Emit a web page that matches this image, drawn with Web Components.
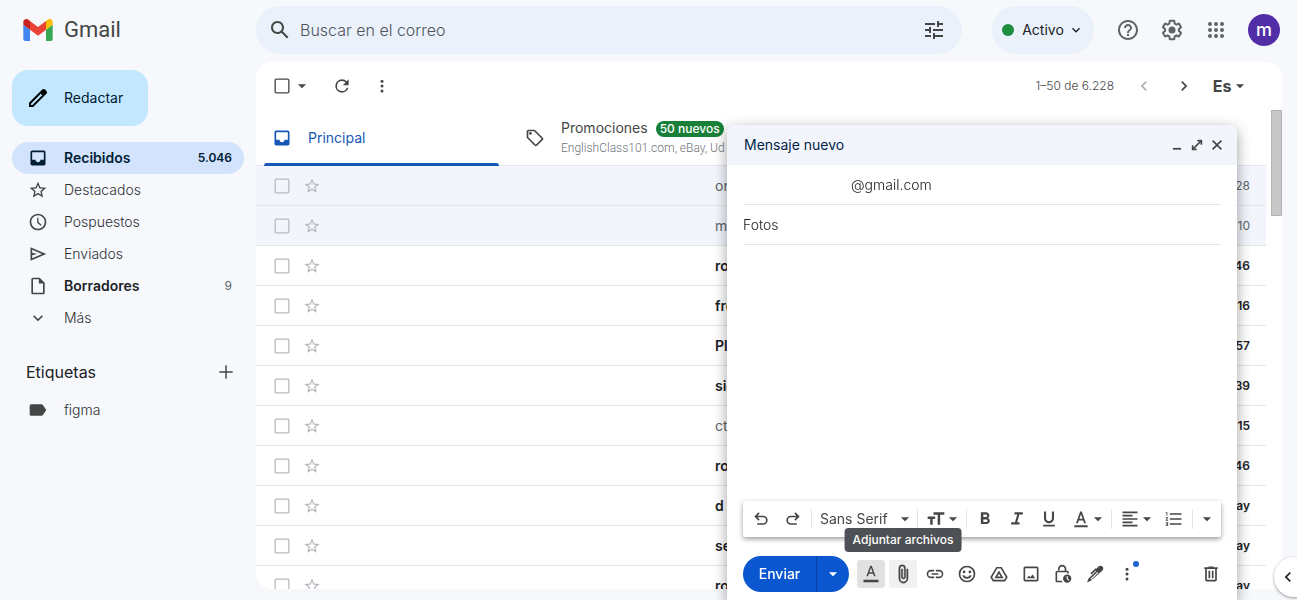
<!DOCTYPE html>
<html lang="es">
<head>
<meta charset="utf-8">
<meta name="viewport" content="width=device-width, initial-scale=1">
<title>Gmail</title>
<style>
  html, body { margin: 0; height: 100%; }
  body {
    --ink: #202124;
    --muted: #444746;
    --soft: #5f6368;
    --page: #f6f8fc;
    --field: #eaf1fb;
    --line: #e4e6e9;
    --blue: #0b57d0;
    background: var(--page);
    color: var(--ink);
    font: 14px/20px Inter, "Open Sans", sans-serif;
    overflow: hidden;
  }
</style>
</head>
<body>
<gm-app></gm-app>

<script>
const ICONS = {
  search: '<path d="M20.49 19l-5.73-5.73C15.53 12.2 16 10.91 16 9.5 16 5.91 13.09 3 9.5 3S3 5.91 3 9.5 5.91 16 9.5 16c1.41 0 2.7-.47 3.77-1.24L19 20.49 20.49 19zM5 9.5C5 7.01 7.01 5 9.5 5S14 7.01 14 9.5 11.99 14 9.5 14 5 11.99 5 9.5z"/>',
  tune: '<path d="M3 17v2h6v-2H3zM3 5v2h10V5H3zm10 16v-2h8v-2h-8v-2h-2v6h2zM7 9v2H3v2h4v2h2V9H7zm14 4v-2H11v2h10zm-6-4h2V7h4V5h-4V3h-2v6z"/>',
  down: '<path d="M7.41 8.59 12 13.17l4.59-4.58L18 10l-6 6-6-6z"/>',
  left: '<path d="M15.41 7.41 14 6l-6 6 6 6 1.41-1.41L10.83 12z"/>',
  right: '<path d="M8.59 16.59 10 18l6-6-6-6-1.41 1.41L13.17 12z"/>',
  caret: '<path d="M5 9l7 7 7-7z"/>',
  help: '<path d="M11 18h2v-2h-2v2zm1-16C6.48 2 2 6.48 2 12s4.48 10 10 10 10-4.48 10-10S17.52 2 12 2zm0 18c-4.41 0-8-3.59-8-8s3.59-8 8-8 8 3.59 8 8-3.59 8-8 8zm0-14c-2.21 0-4 1.79-4 4h2c0-1.1.9-2 2-2s2 .9 2 2c0 2-3 1.75-3 5h2c0-2.25 3-2.5 3-5 0-2.21-1.79-4-4-4z"/>',
  settings: '<path d="M13.85 22.25h-3.7c-.74 0-1.36-.54-1.45-1.27l-.27-1.89c-.27-.14-.53-.29-.79-.46l-1.8.72c-.7.26-1.47-.03-1.81-.65L2.2 15.53c-.35-.66-.2-1.44.36-1.88l1.53-1.19c-.01-.15-.02-.3-.02-.46 0-.15.01-.31.02-.46l-1.52-1.19c-.59-.45-.74-1.26-.37-1.88l1.85-3.19c.34-.62 1.11-.9 1.79-.63l1.81.73c.26-.17.52-.32.78-.46l.27-1.91c.09-.7.71-1.25 1.44-1.25h3.7c.74 0 1.36.54 1.45 1.27l.27 1.89c.27.14.53.29.79.46l1.8-.72c.71-.26 1.48.03 1.82.65l1.84 3.18c.36.66.2 1.44-.36 1.88l-1.52 1.19c.01.15.02.3.02.46s-.01.31-.02.46l1.52 1.19c.56.45.72 1.23.37 1.86l-1.86 3.22c-.34.62-1.11.9-1.8.63l-1.8-.72c-.26.17-.52.32-.78.46l-.27 1.91c-.1.68-.72 1.22-1.46 1.22zm-3.23-2h2.76l.37-2.55.53-.22c.44-.18.88-.44 1.34-.78l.45-.34 2.38.96 1.38-2.4-2.03-1.58.07-.56c.03-.26.06-.51.06-.78s-.03-.53-.06-.78l-.07-.56 2.03-1.58-1.39-2.4-2.39.96-.45-.35c-.42-.32-.87-.58-1.33-.77l-.52-.22-.37-2.55h-2.76l-.37 2.55-.53.21c-.44.19-.88.44-1.34.79l-.45.33-2.38-.95-1.39 2.39 2.03 1.58-.07.56a7 7 0 0 0-.06.79c0 .26.02.53.06.78l.07.56-2.03 1.58 1.38 2.4 2.39-.96.45.35c.43.33.86.58 1.33.77l.53.22.38 2.55z"/><circle cx="12" cy="12" r="3.5"/>',
  apps: '<circle cx="6" cy="6" r="2"/><circle cx="12" cy="6" r="2"/><circle cx="18" cy="6" r="2"/><circle cx="6" cy="12" r="2"/><circle cx="12" cy="12" r="2"/><circle cx="18" cy="12" r="2"/><circle cx="6" cy="18" r="2"/><circle cx="12" cy="18" r="2"/><circle cx="18" cy="18" r="2"/>',
  pen: '<path d="M20.41 4.94l-1.35-1.35c-.78-.78-2.05-.78-2.83 0L3 16.82V21h4.18L20.41 7.77c.79-.78.79-2.05 0-2.83zm-14 14.12L5 19v-1.36l9.82-9.82 1.41 1.41-9.82 9.83z"/>',
  inbox: '<path d="M19 3H5c-1.1 0-2 .9-2 2v14c0 1.1.9 2 2 2h14c1.1 0 2-.9 2-2V5c0-1.1-.9-2-2-2zm0 11h-4c0 1.66-1.35 3-3 3s-3-1.34-3-3H5V5h14v9z"/>',
  star: '<path d="M22 9.24l-7.19-.62L12 2 9.19 8.63 2 9.24l5.46 4.73L5.82 21 12 17.27 18.18 21l-1.63-7.03L22 9.24zM12 15.4l-3.76 2.27 1-4.28-3.32-2.88 4.38-.38L12 6.1l1.71 4.04 4.38.38-3.32 2.88 1 4.28L12 15.4z"/>',
  clock: '<path d="M12 2C6.5 2 2 6.5 2 12s4.5 10 10 10 10-4.5 10-10S17.5 2 12 2zm0 18c-4.41 0-8-3.59-8-8s3.59-8 8-8 8 3.59 8 8-3.59 8-8 8zm-1-13h1.6v5.1l3.6 3.2-1.1 1.2L11 12.8z"/>',
  send: '<path d="M3 20V4l19 8L3 20zm2-3 11.85-5L5 7v3.5l6 1.5-6 1.5V17z"/>',
  file: '<path d="M14 2H6c-1.1 0-2 .9-2 2v16c0 1.1.9 2 2 2h12c1.1 0 2-.9 2-2V8l-6-6zM6 20V4h7v5h5v11H6z"/>',
  plus: '<path d="M20 12.900h-7.100V20h-1.800v-7.100H4v-1.800h7.100V4h1.800v7.100H20z"/>',
  label: '<path d="M17.6 5.8C17.3 5.3 16.700 5 16 5H4C2.900 5 2 5.900 2 7v10c0 1.100.9 2 2 2h12c.7 0 1.300-.3 1.600-.8L22 12z"/>',
  refresh: '<path d="M17.65 6.35A7.96 7.96 0 0 0 12 4a8 8 0 1 0 7.73 10h-2.080A6 6 0 1 1 12 6c1.660 0 3.140.69 4.220 1.780L13 11h7V4l-2.350 2.350z"/>',
  more: '<circle cx="12" cy="5.500" r="2"/><circle cx="12" cy="12" r="2"/><circle cx="12" cy="18.500" r="2"/>',
  tag: '<path d="M21.410 11.580 12.410 2.580C12.050 2.220 11.550 2 11 2H4c-1.100 0-2 .9-2 2v7c0 .55.22 1.050.59 1.420l9 9c.78.78 2.040.78 2.820 0l7-7c.78-.78.78-2.050 0-2.840zM13 20 4 11V4h7l9 9-7 7z"/><circle cx="6.500" cy="6.500" r="1.600"/>',
  minimize: '<path d="M5 17h14v3H5z"/>',
  expand: '<path d="M22 2v9h-2.500V6.300L6.300 19.500H11V22H2v-9h2.500v4.700L17.700 4.500H13V2z" stroke="currentColor" stroke-width=".8"/>',
  close: '<path d="M19.500 6.200 17.800 4.500 12 10.300 6.200 4.500 4.500 6.200 10.300 12 4.500 17.800 6.200 19.500 12 13.700 17.800 19.500 19.500 17.800 13.700 12z"/>',
  undo: '<path d="M7.500 19v-2h7a3.500 3.500 0 0 0 0-7H7.800l2.600 2.600L9 14 4 9l5-5 1.400 1.400L7.800 8h6.700a5.500 5.500 0 0 1 0 11z"/>',
  redo: '<path d="M16.500 19v-2h-7a3.500 3.500 0 0 1 0-7h6.700l-2.600 2.600L15 14l5-5-5-5-1.400 1.400L16.200 8H9.500a5.500 5.500 0 0 0 0 11z"/>',
  size: '<path d="M9 4v3h5v12h3V7h5V4zM2 12h3v7h3v-7h3V9H2z"/>',
  bold: '<path d="M15.600 10.790c.97-.67 1.650-1.770 1.650-2.790 0-2.260-1.750-4-4-4H7v14h7.040c2.090 0 3.710-1.700 3.710-3.790 0-1.520-.86-2.820-2.150-3.420zM10 6.500h3c.83 0 1.500.67 1.500 1.500s-.67 1.500-1.500 1.500h-3v-3zm3.500 9H10v-3h3.500c.83 0 1.500.67 1.500 1.500s-.67 1.500-1.500 1.500z"/>',
  italic: '<path d="M9 4v2.500h3.300l-2.700 9.500H5v2.500h10V16h-2.800l2.700-9.500H19V4z"/>',
  underline: '<path d="M12 17c3.310 0 6-2.690 6-6V3h-2.500v8c0 1.930-1.570 3.500-3.500 3.500S8.500 12.930 8.500 11V3H6v8c0 3.310 2.690 6 6 6zm-7 2v2h14v-2H5z"/>',
  color: '<path d="M4 19.500h16V22H4zM11 3 6 17h2.200l1.200-3.300h5.200l1.200 3.300H18L13 3h-2zm-.9 8.800L12 6.200l1.900 5.600h-3.800z"/>',
  format: '<path d="M2 19.500h20V23H2zM11 1 5.800 15h2.100l1.300-3.400h5.600l1.300 3.400h2.100L13 1h-2zm-1.200 8.800L12 3.600l2.200 6.200H9.800z"/>',
  align: '<path d="M15 15H3v2h12v-2zm0-8H3v2h12V7zM3 13h18v-2H3v2zm0 8h18v-2H3v2zM3 3v2h18V3H3z"/>',
  list: '<path d="M2 17h2v.5H3v1h1v.5H2v1h3v-4H2v1zm1-9h1V4H2v1h1v3zm-1 3h1.800L2 13.100v.9h3v-1H3.200L5 10.900V10H2v1zm5-6v2h14V5H7zm0 14h14v-2H7v2zm0-6h14v-2H7v2z"/>',
  clip: '<path d="M16.500 6v11.500a4 4 0 0 1-8 0V5a2.500 2.500 0 0 1 5 0v10.500a1 1 0 0 1-2 0V6H10v9.500a2.500 2.500 0 0 0 5 0V5a4 4 0 0 0-8 0v12.500a5.500 5.500 0 0 0 11 0V6z" stroke="currentColor" stroke-width=".6"/>',
  link: '<path d="M3.900 12A3.100 3.100 0 0 1 7 8.900h4V7H7a5 5 0 0 0 0 10h4v-1.900H7A3.100 3.100 0 0 1 3.900 12zM8 13h8v-2H8zm9-6h-4v1.900h4a3.100 3.100 0 0 1 0 6.200h-4V17h4a5 5 0 0 0 0-10z"/>',
  smile: '<path d="M12 2a10 10 0 1 0 0 20 10 10 0 0 0 0-20zm0 18a8 8 0 1 1 0-16 8 8 0 0 1 0 16z"/><circle cx="8.500" cy="9.500" r="1.600"/><circle cx="15.500" cy="9.500" r="1.600"/><path d="M6.500 13.500h2.200a3.600 3.600 0 0 0 6.600 0h2.200a5.700 5.700 0 0 1-11 0z"/>',
  drive: '<path d="M8.800 3.500h6.400L22.500 15.800 19.300 21H4.700l-3.200-5.200zm1.100 2-6.100 10.300L5.800 19h12.400l2-3.200L14.100 5.500z"/><path fill-rule="evenodd" d="M12 7.800 6.500 17h11zm0 3.800 2 3.500h-4z"/>',
  image: '<path d="M19 5v14H5V5h14m0-2H5c-1.100 0-2 .9-2 2v14c0 1.100.9 2 2 2h14c1.100 0 2-.9 2-2V5c0-1.100-.9-2-2-2zM7 17h10l-3.200-4.300-2.500 3.200-1.700-2z"/>',
  lock: '<path d="M10.500 20H5V10h12v1.500h2V10c0-1.100-.9-2-2-2h-1V6A5 5 0 0 0 6 6v1.500h2V6a3 3 0 0 1 6 0v2H5c-1.100 0-2 .9-2 2v10c0 1.100.9 2 2 2h6.500z"/><path fill-rule="evenodd" d="M17 12.500a5 5 0 1 0 0 10 5 5 0 0 0 0-10zm-.6 2h1.200v2.700l1.900 1.900-.9.9-2.200-2.300z"/>',
  sign: '<path d="M21 3c-1.400-1.400-3.400-1.300-4.800 0L13.500 5.700 12.700 5 6.500 11.200l1.400 1.400 4.800-4.800.7.700L4 17.800 2.500 22l4.200-1.500L21 7.800c1.300-1.400 1.300-3.500 0-4.800zM6.500 17.900l8.300-8.300 1 1-8.300 8.300z"/>',
  trash: '<path d="M15 4V3H9v1H4v2h1v13c0 1.100.9 2 2 2h10c1.100 0 2-.9 2-2V6h1V4h-5zm2 15H7V6h10v13zM9 8h2v9H9zm4 0h2v9h-2z"/>'
};

/* Shared reset used inside each shadow root. */
const BASE = `
  * { box-sizing: border-box; }
  :host([hidden]) { display: none; }
  button, input, select, textarea { font: inherit; color: inherit; border: 0; margin: 0; padding: 0; background: none; outline: 0; }
  button { cursor: pointer; display: flex; align-items: center; justify-content: center; }
  a { color: inherit; text-decoration: none; }
`;

const define = (name, render) => customElements.define(name, class extends HTMLElement {
  connectedCallback() {
    if (this.shadowRoot) return;
    const tpl = document.createElement('template');
    tpl.innerHTML = render(this);
    this.attachShadow({ mode: 'open' }).append(tpl.content.cloneNode(true));
  }
});

define('gm-icon', el => {
  const size = el.getAttribute('size') || 20;
  return `<style>:host{display:block;flex:none;width:${size}px;height:${size}px}svg{display:block;width:100%;height:100%;fill:currentColor}</style>
  <svg viewBox="0 0 24 24" aria-hidden="true">${ICONS[el.getAttribute('name')]}</svg>`;
});

define('gm-logo', () => `<style>
  :host { display: flex; align-items: center; gap: 11px; color: #444746; font: 22px/28px Roboto, sans-serif; }
  svg { width: 30px; height: 22px; }
  </style>
  <svg viewBox="52 42 88 66" aria-hidden="true">
    <path fill="#4285f4" d="M58 108h14V74L52 59v43c0 3.320 2.690 6 6 6"/>
    <path fill="#34a853" d="M120 108h14c3.320 0 6-2.690 6-6V59l-20 15"/>
    <path fill="#fbbc04" d="M120 48v26l20-15v-8c0-7.420-8.470-11.650-14.400-7.200"/>
    <path fill="#ea4335" d="M72 74V48l24 18 24-18v26L96 92"/>
    <path fill="#c5221f" d="M52 51v8l20 15V48l-5.600-4.200c-5.940-4.450-14.400-.22-14.400 7.200"/>
  </svg><span>Gmail</span>`);

define('gm-header', () => `<style>${BASE}
  :host { display: flex; align-items: center; height: 62px; padding: 6px 17px 8px 0; }
  gm-logo { width: 256px; flex: none; padding-left: 23px; }
  .search { flex: 1; min-width: 0; height: 48px; margin-right: 30px; border-radius: 24px; background: var(--field); display: flex; align-items: center; padding: 0 16px 0 12px; gap: 8px; color: var(--muted); }
  .search input { flex: 1; min-width: 0; font-size: 16px; font-weight: 300; line-height: 24px; }
  .search input::placeholder { color: #50545a; opacity: 1; }
  .status { height: 48px; width: 102px; border-radius: 24px; background: var(--field); margin-right: 14px; flex: none; }
  .dot { width: 12px; height: 12px; margin-right: 8px; border-radius: 50%; background: #1e8e3e; }
  .status gm-icon { margin-left: 4px; }
  .tools { display: flex; align-items: center; gap: 4px; color: var(--soft); }
  .tools button { width: 40px; height: 40px; }
  .tools .avatar { width: 32px; height: 32px; margin-left: 8px; border-radius: 50%; background: #512da8; color: #fff; font-size: 18px; font-weight: 500; line-height: 20px; }
  </style>
  <gm-logo></gm-logo>
  <form class="search" role="search">
    <button type="button" aria-label="Buscar"><gm-icon name="search" size="24"></gm-icon></button>
    <input type="text" placeholder="Buscar en el correo" aria-label="Buscar en el correo">
    <button type="button" aria-label="Opciones de búsqueda"><gm-icon name="tune" size="24"></gm-icon></button>
  </form>
  <button class="status"><span class="dot"></span><span>Activo</span><gm-icon name="down" size="16"></gm-icon></button>
  <div class="tools">
    <button aria-label="Ayuda"><gm-icon name="help" size="24"></gm-icon></button>
    <button aria-label="Configuración"><gm-icon name="settings" size="24"></gm-icon></button>
    <button aria-label="Aplicaciones"><gm-icon name="apps" size="24"></gm-icon></button>
    <button class="avatar" aria-label="Cuenta">m</button>
  </div>`);

define('gm-nav-item', el => `<style>${BASE}
  :host { display: block; color: var(--muted); }
  a { display: flex; align-items: center; gap: 16px; height: 32px; padding: 0 12px 0 16px; border-radius: 16px; }
  slot { display: block; }
  .label { flex: 1; font-weight: 300; color: #2d3033; }
  .count { font-size: 12px; }
  :host([unread]) { color: var(--muted); }
  :host([unread]) .label { font-weight: 600; color: var(--ink); }
  :host([unread]) .count { color: var(--soft); }
  :host([current]) { color: #001d35; }
  :host([current]) a { background: #d3e3fd; }
  :host([current]) .label { font-weight: 600; color: inherit; }
  :host([current]) .count { font-weight: 600; color: inherit; }
  </style>
  <a href="#"><gm-icon name="${el.getAttribute('icon')}" size="${el.getAttribute('size') || 20}"></gm-icon><span class="label"><slot></slot></span>${el.hasAttribute('count') ? `<span class="count">${el.getAttribute('count')}</span>` : ''}</a>`);

define('gm-sidebar', () => `<style>${BASE}
  :host { display: block; width: 256px; flex: none; padding: 8px 12px; }
  .compose { width: 136px; height: 56px; border-radius: 16px; background: #c2e7ff; color: #001d35; justify-content: flex-start; gap: 14px; padding-left: 14px; margin-bottom: 16px; }
  .compose gm-icon { color: #000; }
  .labels { display: flex; align-items: center; justify-content: space-between; height: 32px; padding: 0 8px 0 14px; margin: 22px 0 6px; }
  .labels button { color: var(--muted); }
  h2 { margin: 0; font-size: 16px; line-height: 24px; font-weight: 400; }
  </style>
  <button class="compose"><gm-icon name="pen" size="24"></gm-icon><span>Redactar</span></button>
  <nav>
    <gm-nav-item icon="inbox" count="5.046" current>Recibidos</gm-nav-item>
    <gm-nav-item icon="star">Destacados</gm-nav-item>
    <gm-nav-item icon="clock">Pospuestos</gm-nav-item>
    <gm-nav-item icon="send">Enviados</gm-nav-item>
    <gm-nav-item icon="file" count="9" unread>Borradores</gm-nav-item>
    <gm-nav-item icon="down">Más</gm-nav-item>
  </nav>
  <div class="labels"><h2>Etiquetas</h2><button aria-label="Crear etiqueta"><gm-icon name="plus" size="20"></gm-icon></button></div>
  <nav><gm-nav-item icon="label">figma</gm-nav-item></nav>`);

const box = c => `url("data:image/svg+xml,%3Csvg xmlns='http://www.w3.org/2000/svg' viewBox='0 0 24 24' fill='%23${c}'%3E%3Cpath d='M19.400 4.600v14.800H4.600V4.600h14.800m-.4-1.600H5c-1.100 0-2 .9-2 2v14c0 1.100.9 2 2 2h14c1.100 0 2-.9 2-2V5c0-1.100-.9-2-2-2z'/%3E%3C/svg%3E")`;

define('gm-list-toolbar', () => `<style>${BASE}
  :host { display: flex; align-items: center; height: 48px; padding: 0 30px 0 16px; color: var(--muted); }
  input { appearance: none; width: 20px; height: 20px; background: ${box('444746')}; }
  .menu { width: 20px; height: 40px; margin-right: 10px; }
  .act { width: 40px; height: 40px; }
  .range { margin-left: auto; margin-right: 10px; font-size: 12px; font-weight: 300; color: var(--muted); }
  .off { color: #b0b3b6; }
  .lang { width: 48px; height: 40px; padding-left: 4px; gap: 2px; font-weight: 700; font-size: 16px; }
  </style>
  <input type="checkbox" aria-label="Seleccionar">
  <button class="menu" aria-label="Opciones de selección"><gm-icon name="caret" size="14"></gm-icon></button>
  <button class="act" aria-label="Actualizar"><gm-icon name="refresh" size="20"></gm-icon></button>
  <button class="act" aria-label="Más"><gm-icon name="more" size="18"></gm-icon></button>
  <span class="range">1–50 de 6.228</span>
  <button class="act off" aria-label="Más recientes"><gm-icon name="left" size="20"></gm-icon></button>
  <button class="act" aria-label="Más antiguos"><gm-icon name="right" size="20"></gm-icon></button>
  <button class="lang">Es<gm-icon name="caret" size="14"></gm-icon></button>`);

define('gm-tab', el => `<style>${BASE}
  :host { display: block; width: 253px; color: var(--muted); --tab: #1557b4; }
  button { position: relative; width: 100%; height: 56px; padding-left: 16px; gap: 16px; justify-content: flex-start; text-align: left; }
  .text { min-width: 0; white-space: nowrap; }
  ::slotted([slot=note]) { display: block; font: 300 12px/20px Roboto, sans-serif; color: #6f7377; }
  :host([selected]) { color: var(--tab); }
  :host([selected]) button::after { content: ""; position: absolute; left: 8px; right: 10px; bottom: 0; height: 3px; border-radius: 3px 3px 0 0; background: var(--tab); }
  </style>
  <button role="tab" aria-selected="${el.hasAttribute('selected')}"><gm-icon name="${el.getAttribute('icon')}"></gm-icon><span class="text"><slot></slot><slot name="note"></slot></span></button>`);

const MAILS = [
  ['or', '28', 'read'], ['me', '10', 'read'], ['ro', '46', ''], ['fro', '16', ''], ['Pl', '57', ''],
  ['sig', '39', ''], ['ct,', '15', 'plain'], ['ro', '46', ''], ['d', 'ay', ''], ['se', 'ay', ''], ['ro', 'ay', '']
];

define('gm-mail-table', () => `<style>${BASE}
  :host { display: block; flex: 1; min-width: 0; }
  table { width: 100%; table-layout: fixed; border-collapse: separate; border-spacing: 0; }
  td { height: 40px; padding: 0; border-bottom: 1px solid var(--line); font-weight: 600; white-space: nowrap; overflow: hidden; }
  .pick { width: 46px; padding-left: 16px; }
  .mark { width: 20px; }
  .from { width: 393px; }
  .date { width: 60px; padding-right: 16px; text-align: right; font-size: 12px; }
  .read td { background: #f2f6fc; font-weight: 400; color: var(--soft); }
  .plain .subject { font-weight: 400; color: var(--soft); }
  input { display: block; appearance: none; width: 20px; height: 20px; background: ${box('b9bbbe')}; }
  button { width: 20px; height: 20px; color: #b4b6b9; }
  </style>
  <table aria-label="Mensajes"><tbody>
  ${MAILS.map(([s, d, c]) => `<tr class="${c}"><td class="pick"><input type="checkbox" aria-label="Seleccionar mensaje"></td><td class="mark"><button aria-label="Destacar"><gm-icon name="star" size="18"></gm-icon></button></td><td class="from"></td><td class="subject">${s}</td><td class="date">${d}</td></tr>`).join('')}
  </tbody></table>`);

define('gm-mailbox', () => `<style>${BASE}
  :host { flex: 1; min-width: 0; display: flex; flex-direction: column; margin: 0 15px 11px 0; background: #fff; border-radius: 16px 16px 0 16px; overflow: hidden; }
  .scroll { flex: 1; min-height: 0; display: flex; overflow: hidden; }
  .content { flex: 1; min-width: 0; }
  .tabs { display: flex; border-bottom: 1px solid var(--line); height: 56px; }
  .badge { display: inline-block; margin-left: 8px; padding: 0 4px; border-radius: 8px; background: #188038; color: #fff; font-size: 12px; line-height: 16px; font-weight: 500; }
  .bar { width: 16px; display: flex; justify-content: flex-end; }
  .thumb { width: 11px; height: 106px; background: #c8c8c8; border: 1px solid #b4b4b4; }
  </style>
  <gm-list-toolbar></gm-list-toolbar>
  <div class="scroll">
    <div class="content">
      <div class="tabs" role="tablist">
        <gm-tab icon="inbox" selected>Principal</gm-tab>
        <gm-tab icon="tag">Promociones<span class="badge">50 nuevos</span><span slot="note">EnglishClass101.com, eBay, Ud</span></gm-tab>
      </div>
      <gm-mail-table></gm-mail-table>
    </div>
    <div class="bar"><div class="thumb"></div></div>
  </div>`);

define('gm-format-bar', () => `<style>${BASE}
  :host { display: flex; align-items: center; height: 36px; padding: 0 2px; background: #fff; border-radius: 2px; color: var(--muted); box-shadow: 0 2px 5px rgba(0,0,0,.4); }
  .b { width: 32px; height: 32px; flex: none; }
  .w { width: 44px; height: 32px; padding-left: 2px; flex: none; }
  .m { width: 24px; height: 32px; flex: none; }
  i { width: 1px; height: 20px; margin: 0 2px; background: #e3e4e6; flex: none; }
  .font { flex: 1; min-width: 0; display: flex; align-items: center; padding: 0 3px 0 6px; }
  select { appearance: none; flex: 1; min-width: 0; height: 32px; }
  </style>
  <button class="b" aria-label="Deshacer"><gm-icon name="undo"></gm-icon></button>
  <button class="b" aria-label="Rehacer"><gm-icon name="redo"></gm-icon></button><i></i>
  <label class="font"><select aria-label="Fuente"><option>Sans Serif</option></select><gm-icon name="caret" size="14"></gm-icon></label><i></i>
  <button class="w" aria-label="Tamaño"><gm-icon name="size"></gm-icon><gm-icon name="caret" size="14"></gm-icon></button><i></i>
  <button class="b" aria-label="Negrita"><gm-icon name="bold"></gm-icon></button>
  <button class="b" aria-label="Cursiva"><gm-icon name="italic"></gm-icon></button>
  <button class="b" aria-label="Subrayado"><gm-icon name="underline"></gm-icon></button>
  <button class="w" aria-label="Color del texto"><gm-icon name="color"></gm-icon><gm-icon name="caret" size="14"></gm-icon></button><i></i>
  <button class="w" aria-label="Alinear"><gm-icon name="align"></gm-icon><gm-icon name="caret" size="14"></gm-icon></button>
  <button class="b" aria-label="Lista numerada"><gm-icon name="list"></gm-icon></button><i></i>
  <button class="m" aria-label="Más opciones de formato"><gm-icon name="caret" size="14"></gm-icon></button>`);

define('gm-tool', el => `<style>${BASE}
  :host { display: block; position: relative; color: var(--muted); }
  button { width: 28px; height: 28px; border-radius: 3px; }
  :host([active]) button { background: #e1e1e1; }
  :host([hover]) button { background: #f1f1f1; }
  .tip { position: absolute; bottom: 36px; left: 50%; transform: translateX(-50%); padding: 0 8px; border-radius: 4px; background: #4d5054; color: #fff; font-size: 12px; line-height: 24px; font-weight: 500; white-space: nowrap; }
  .dot { position: absolute; top: 1px; right: 2px; width: 6px; height: 6px; border-radius: 50%; background: #1967d2; }
  </style>
  <button aria-label="${el.getAttribute('label')}"><gm-icon name="${el.getAttribute('icon')}" size="${el.getAttribute('size') || 20}"></gm-icon></button>
  ${el.hasAttribute('hover') ? `<span class="tip" role="tooltip">${el.getAttribute('label')}</span>` : ''}${el.hasAttribute('dot') ? '<span class="dot"></span>' : ''}`);

define('gm-compose', () => `<style>${BASE}
  :host { position: fixed; right: 60px; top: 125px; bottom: 0; width: 510px; display: flex; flex-direction: column; background: #fff; border-radius: 8px 8px 0 0; box-shadow: 0 4px 14px rgba(0,0,0,.38); }
  header { display: flex; align-items: center; height: 40px; flex: none; padding: 0 10px 0 17px; background: #f2f6fc; border-radius: 8px 8px 0 0; color: #041e49; }
  h2 { flex: 1; margin: 0; font-size: 14px; line-height: 20px; font-weight: 400; }
  header button { width: 20px; height: 20px; color: var(--muted); }
  .field { display: block; flex: none; margin: 0 16px; height: 40px; border-bottom: 1px solid var(--line); }
  .field input { width: 100%; height: 39px; font-weight: 300; }
  .to input { padding-left: 108px; }
  textarea { flex: 1; min-height: 0; margin: 8px 16px; resize: none; }
  gm-format-bar { flex: none; margin: 0 16px; }
  footer { flex: none; display: flex; align-items: center; gap: 4px; padding: 19px 12px 8px 16px; }
  .send { display: flex; height: 36px; margin-right: 4px; border-radius: 18px; overflow: hidden; background: var(--blue); color: #fff; font-weight: 500; }
  .send button { height: 36px; }
  .send .go { width: 73px; }
  .send .later { width: 33px; border-left: 1px solid #0842a0; }
  .trash { margin-left: auto; }
  </style>
  <header><h2>Mensaje nuevo</h2>
    <button aria-label="Minimizar"><gm-icon name="minimize" size="14"></gm-icon></button>
    <button aria-label="Pantalla completa"><gm-icon name="expand" size="12"></gm-icon></button>
    <button aria-label="Cerrar"><gm-icon name="close" size="16"></gm-icon></button>
  </header>
  <label class="field to"><input type="text" value="@gmail.com" aria-label="Para"></label>
  <label class="field"><input type="text" value="Fotos" aria-label="Asunto"></label>
  <textarea aria-label="Cuerpo del mensaje"></textarea>
  <gm-format-bar></gm-format-bar>
  <footer>
    <div class="send"><button class="go">Enviar</button><button class="later" aria-label="Más opciones de envío"><gm-icon name="caret" size="14"></gm-icon></button></div>
    <gm-tool icon="format" size="18" label="Opciones de formato" active></gm-tool>
    <gm-tool icon="clip" label="Adjuntar archivos" hover></gm-tool>
    <gm-tool icon="link" label="Insertar enlace"></gm-tool>
    <gm-tool icon="smile" label="Insertar emoji"></gm-tool>
    <gm-tool icon="drive" label="Insertar desde Drive"></gm-tool>
    <gm-tool icon="image" label="Insertar foto"></gm-tool>
    <gm-tool icon="lock" label="Modo confidencial"></gm-tool>
    <gm-tool icon="sign" label="Insertar firma"></gm-tool>
    <gm-tool icon="more" size="18" label="Más opciones" dot></gm-tool>
    <gm-tool class="trash" icon="trash" label="Descartar borrador"></gm-tool>
  </footer>`);

define('gm-app', () => `<style>${BASE}
  :host { display: flex; flex-direction: column; height: 100vh; }
  main { flex: 1; min-height: 0; display: flex; }
  .panel { position: fixed; right: -17px; bottom: 3px; width: 40px; height: 40px; border-radius: 50%; background: #fff; box-shadow: 0 1px 3px rgba(0,0,0,.4); justify-content: flex-start; padding-left: 4px; }
  </style>
  <gm-header></gm-header>
  <main><gm-sidebar></gm-sidebar><gm-mailbox></gm-mailbox></main>
  <gm-compose></gm-compose>
  <button class="panel" aria-label="Mostrar panel lateral"><gm-icon name="left" size="20"></gm-icon></button>`);
</script>
</body>
</html>
